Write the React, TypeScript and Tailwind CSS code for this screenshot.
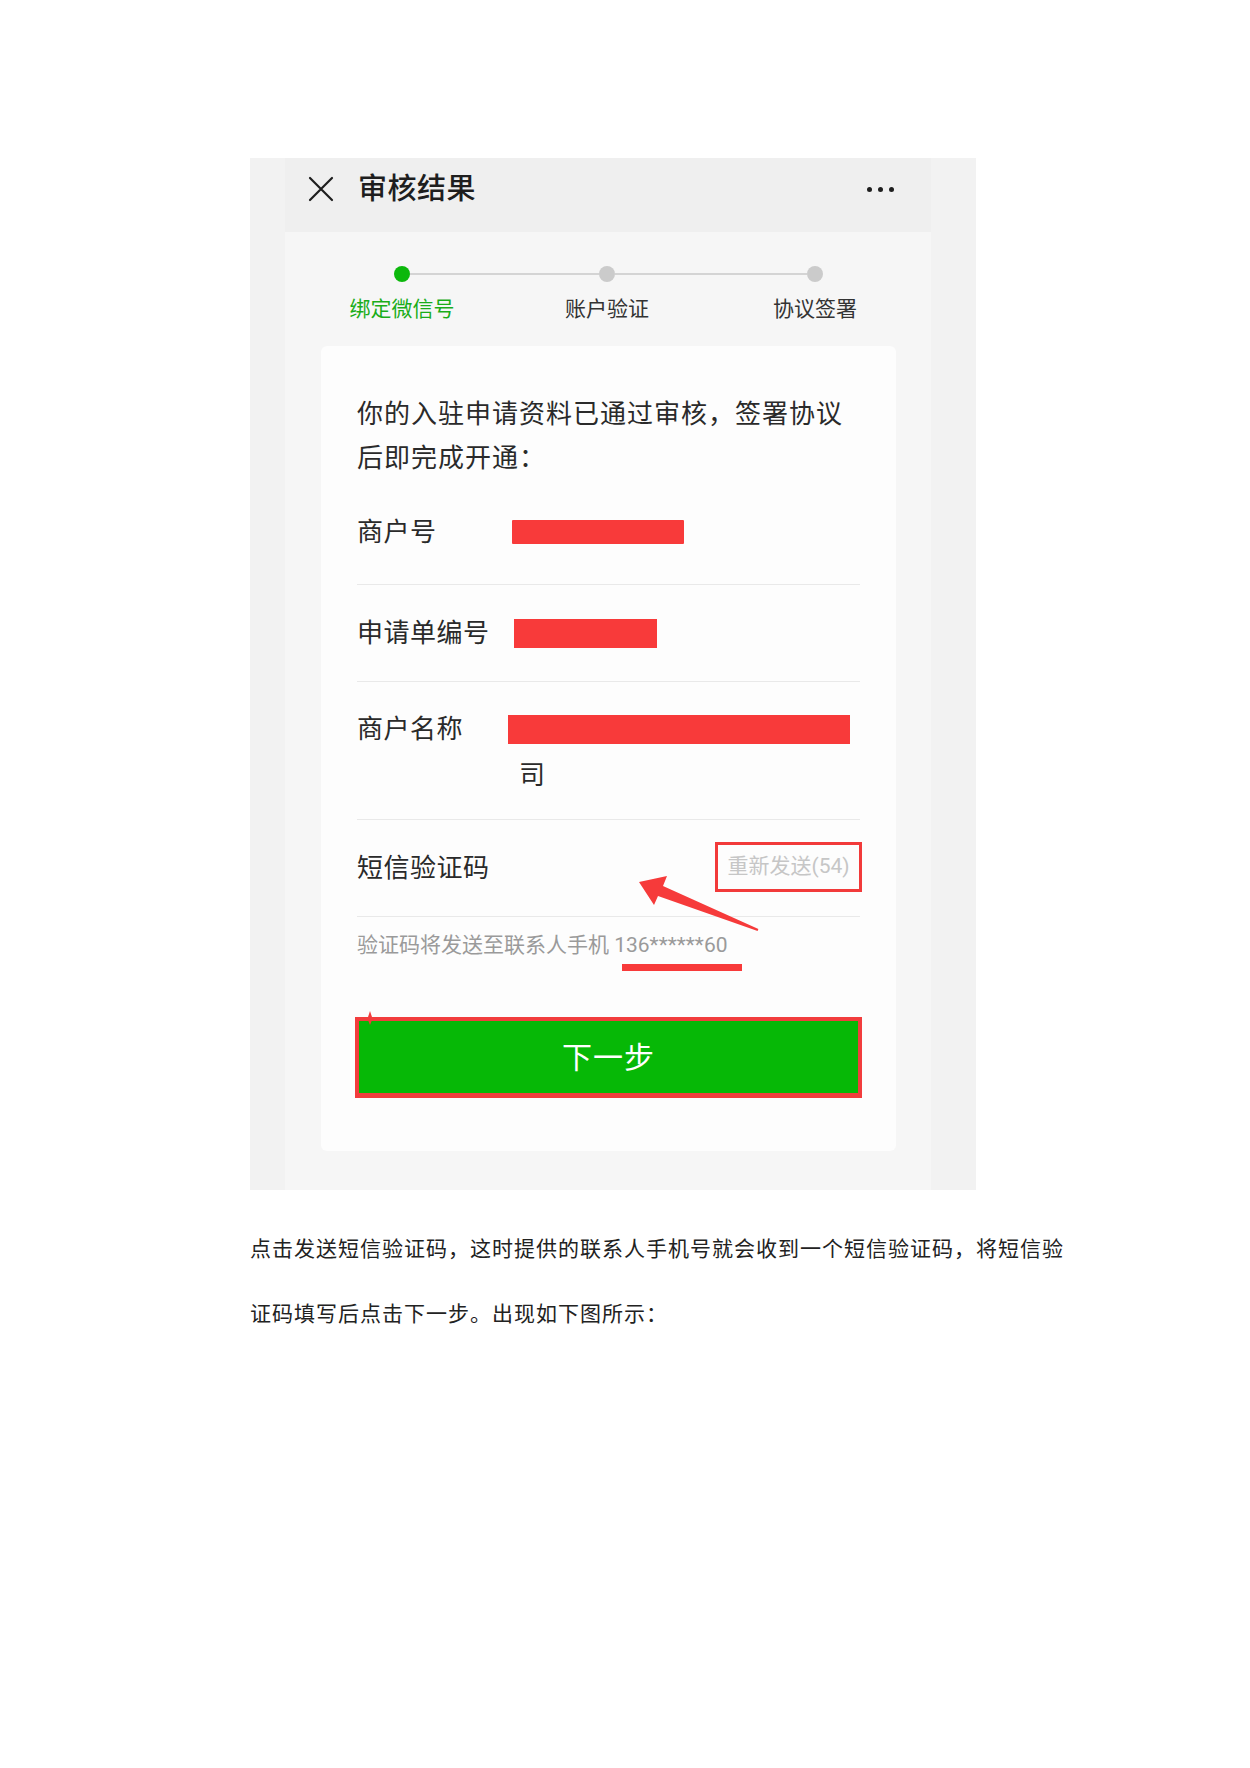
import React from "react";

export default function App() {
  return (
    <div className="w-[1250px] h-[1768px] bg-white pt-[158px] pl-[250px] font-['Roboto','Noto_Sans_CJK_SC',sans-serif]">
      {/* phone screenshot */}
      <div className="w-[726px] h-[1032px] bg-[#f2f2f2] pl-[35px] pr-[45px] flex">
        <div className="flex-1 bg-[#f6f6f6] flex flex-col">
          {/* header */}
          <div className="h-[74px] pb-[12px] bg-[#efefef] flex items-center pl-[23px] pr-[37px]">
            <svg width="26" height="26" viewBox="0 0 26 26">
              <path d="M2 2 L24 24 M24 2 L2 24" stroke="#1e1e1e" strokeWidth="2.2" strokeLinecap="round" />
            </svg>
            <div className="ml-[24px] text-[29px] leading-[40px] font-medium text-[#1e1e1e] tracking-[0.5px]">审核结果</div>
            <div className="flex-1" />
            <div className="flex items-center gap-[6px]">
              <div className="w-[5px] h-[5px] rounded-full bg-[#1e1e1e]" />
              <div className="w-[5px] h-[5px] rounded-full bg-[#1e1e1e]" />
              <div className="w-[5px] h-[5px] rounded-full bg-[#1e1e1e]" />
            </div>
          </div>

          {/* steps */}
          <div className="mt-[34px] flex items-center pl-[109px]">
            <div className="w-4 h-4 rounded-full bg-[#0cb80c]" />
            <div className="w-[189px] h-[2px] bg-[#d4d4d4]" />
            <div className="w-4 h-4 rounded-full bg-[#cbcbcb]" />
            <div className="w-[192px] h-[2px] bg-[#d4d4d4]" />
            <div className="w-4 h-4 rounded-full bg-[#cbcbcb]" />
          </div>
          <div className="mt-[13px] flex text-[21px] leading-[28px]">
            <div className="ml-[17px] w-[200px] text-center text-[#1aad19]">绑定微信号</div>
            <div className="ml-[5px] w-[200px] text-center text-[#333]">账户验证</div>
            <div className="ml-[8px] w-[200px] text-center text-[#333]">协议签署</div>
          </div>

          {/* card */}
          <div className="relative mt-[23px] ml-[36px] w-[575px] h-[805px] rounded-[6px] bg-[#fdfdfd] px-[36px] pt-[46px] text-[#2a2a2a]">
            <div className="text-[26px] leading-[44px] tracking-[1px]">
              你的入驻申请资料已通过审核，签署协议
              <br />
              后即完成开通：
            </div>

            <div className="h-[105px] flex items-center border-b border-[#e9e9e9]">
              <div className="w-[155px] text-[26px] tracking-[0.5px]">商户号</div>
              <div className="w-[172px] h-[24px] bg-[#f83a3a] rounded-[1px]" />
            </div>

            <div className="h-[97px] flex items-center border-b border-[#e9e9e9]">
              <div className="w-[157px] text-[26px] tracking-[0.5px]">申请单编号</div>
              <div className="w-[143px] h-[29px] bg-[#f83a3a]" />
            </div>

            <div className="pt-[24px] pb-[21px] flex border-b border-[#e9e9e9]">
              <div className="w-[151px] text-[26px] leading-[46px] tracking-[0.5px]">商户名称</div>
              <div className="flex flex-col">
                <div className="h-[46px] flex items-center">
                  <div className="w-[342px] h-[29px] bg-[#f83a3a]" />
                </div>
                <div className="ml-[11px] text-[26px] leading-[46px]">司</div>
              </div>
            </div>

            <div className="h-[97px] flex items-center justify-between border-b border-[#e9e9e9]">
              <div className="text-[26px] tracking-[0.5px]">短信验证码</div>
              <div className="-mr-[2px] w-[147px] h-[50px] -mt-[3px] border-[3px] border-[#f23a3a] flex items-center justify-center text-[21px] text-[#c6c6c6]">
                重新发送(54)
              </div>
            </div>

            <div className="pt-[13px] text-[21px] leading-[30px] text-[#9a9a9a]">
              验证码将发送至联系人手机 136******60
            </div>
            <div className="mt-[4px] ml-[265px] w-[120px] h-[7px] bg-[#f83a3a]" />

            <div className="relative mt-[46px] -mx-[2px] h-[81px] bg-[#06b806] border-[4px] border-b-[5px] border-[#f23d3d] flex items-center justify-center text-white text-[30px] tracking-[1px]">
              下一步
              <svg className="absolute left-[4px] top-[-10px]" width="14" height="14" viewBox="0 0 14 14">
                <polygon points="7,0 9,6 14,7 9,9 7,14 5,9 0,7 5,6" fill="#f23d3d" />
              </svg>
            </div>

            {/* annotation arrow */}
            <svg className="absolute left-[309px] top-[522px]" width="140" height="70" viewBox="0 0 140 70">
              <polygon
                points="9,14 37,8 33,18 128.4,61.1 127.6,62.9 28,28 24,37"
                fill="#f63a3a"
              />
            </svg>
          </div>
        </div>
      </div>

      {/* description */}
      <div className="mt-[25px] text-[21px] leading-[65px] tracking-[1px] text-[#222] font-['Noto_Sans_CJK_SC',sans-serif]">
        <div>点击发送短信验证码，这时提供的联系人手机号就会收到一个短信验证码，将短信验</div>
        <div>证码填写后点击下一步。出现如下图所示：</div>
      </div>
    </div>
  );
}
